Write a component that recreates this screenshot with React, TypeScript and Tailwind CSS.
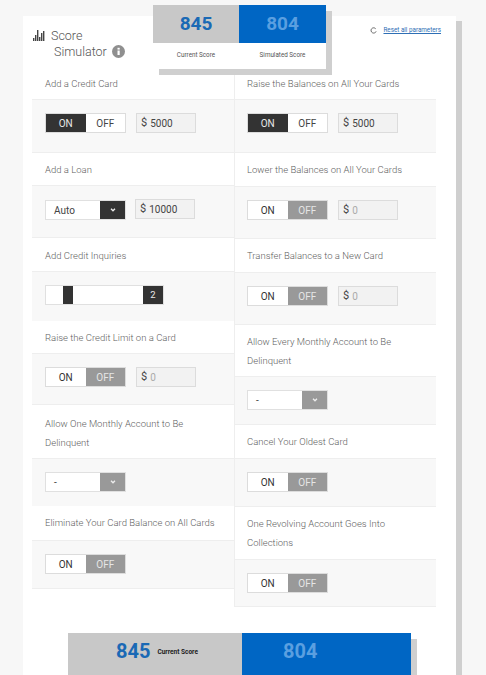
import React from "react";

const font = { fontFamily: "Roboto, sans-serif" };

function Toggle({ on }: { on: boolean }) {
  return (
    <div className="flex h-[20px] w-[81px] border border-[#dcdcdc] text-[10px]">
      <div className={on ? "flex w-1/2 items-center justify-center bg-[#333333] text-[#e8e8e8]" : "flex w-1/2 items-center justify-center bg-white text-[#333]"}>ON</div>
      <div className={on ? "flex w-1/2 items-center justify-center bg-white text-[#444]" : "flex w-1/2 items-center justify-center bg-[#999999] text-[#e6e6e6]"}>OFF</div>
    </div>
  );
}

function Amount({ value, muted }: { value: string; muted?: boolean }) {
  return (
    <div className="flex h-[20px] w-[60px] items-center gap-[3px] border border-[#dcdcdc] bg-[#f2f2f2] pl-[4px] text-[10px] text-[#444]">
      <span className="text-[11px]">$</span>
      <span className={muted ? "text-[#aaa]" : "text-[#444]"}>{value}</span>
    </div>
  );
}

function Select({ label, dark }: { label: string; dark?: boolean }) {
  return (
    <div className="flex h-[20px] w-[81px] border border-[#e0e0e0] bg-white text-[10px] text-[#444]">
      <div className="flex flex-1 items-center pl-[8px]">{label}</div>
      <div className={dark ? "flex w-[25px] items-center justify-center bg-[#333333]" : "flex w-[25px] items-center justify-center bg-[#999999]"}>
        <svg width="6" height="4" viewBox="0 0 7 5" fill="none" stroke="#eee" strokeWidth="1.6"><path d="M1 1l2.5 2.5L6 1" /></svg>
      </div>
    </div>
  );
}

function Slider() {
  return (
    <div className="flex h-[20px] w-[119px] border border-[#e0e0e0] bg-white">
      <div className="w-[17px]" />
      <div className="w-[10px] bg-[#333333]" />
      <div className="flex-1" />
      <div className="flex w-[20px] items-center justify-center bg-[#333333] text-[9.5px] text-[#e8e8e8]">2</div>
    </div>
  );
}

function Row({ title, titleH, controlH, children, border, pt = "pt-[13px]", tp = "pt-[7px]" }: { title: string; titleH: string; controlH: string; children: React.ReactNode; border?: boolean; pt?: string; tp?: string }) {
  return (
    <div>
      <div className={`${titleH} ${tp} border-b border-[#eeeeee] text-[9.5px] font-light leading-[19px] text-[#5f5f5f]`}>
        <div className="pr-[15px]">{title}</div>
      </div>
      <div className={`${controlH} ${pt} flex items-start gap-[10px] bg-[#f8f8f8] ${border ? "border-b border-[#eeeeee]" : ""}`}>
        {children}
      </div>
    </div>
  );
}

export default function App() {
  return (
    <div className="h-[675px] w-[486px] overflow-hidden bg-[#f7f7f7] pl-[23px] pt-[16px]" style={font}>
      <div className="relative w-[433px] bg-white pl-[9px] shadow-[6px_5px_0_0_#cfcfcf]">
        <div className="absolute left-[130px] top-[-11px] z-10 w-[173px] bg-white shadow-[6px_6px_0_0_#cfcfcf]">
          <div className="flex h-[38px]">
            <div className="flex w-[86px] items-center justify-center bg-[#c8c8c8] text-[19px] font-bold text-[#1a69b5]">845</div>
            <div className="flex w-[87px] items-center justify-center bg-[#0066c4] text-[19px] font-bold text-[#5a9fe0]">804</div>
          </div>
          <div className="flex h-[26px] items-center text-[6.3px] text-[#555]">
            <div className="w-[86px] text-center">Current Score</div>
            <div className="w-[87px] text-center">Simulated Score</div>
          </div>
        </div>

        <div className="flex h-[51px] items-start justify-between pr-[15px]">
          <div className="ml-[1px] mt-[12px] text-[12.5px] font-light leading-[15px] text-[#555]">
            <div className="flex items-center gap-[5px]">
              <svg width="13" height="11" viewBox="0 0 13 11" fill="#444">
                <rect x="0" y="8" width="1.4" height="3" /><rect x="2" y="5" width="1.4" height="6" /><rect x="4" y="0" width="1.4" height="11" /><rect x="6" y="7" width="1.4" height="4" /><rect x="8" y="3" width="1.4" height="8" /><rect x="10" y="1" width="1.4" height="10" />
              </svg>
              <span>Score</span>
            </div>
            <div className="ml-[21px] mt-[1px] flex items-center gap-[5px]">
              <span>Simulator</span>
              <svg width="13" height="13" viewBox="0 0 13 13"><circle cx="6.5" cy="6.5" r="6.5" fill="#8f8f8f" /><rect x="5.5" y="5.5" width="2.2" height="4.5" fill="#fff" /><rect x="5.5" y="2.8" width="2.2" height="1.8" fill="#fff" /></svg>
            </div>
          </div>
          <div className="mt-[10px] flex items-center gap-[6px]">
            <svg width="7" height="7" viewBox="0 0 8 8" fill="none" stroke="#555" strokeWidth="1"><path d="M6.5 2A3 3 0 1 0 7 5" /></svg>
            <span className="text-[6.3px] text-[#2f6fb5] underline">Reset all parameters</span>
          </div>
        </div>

        <div className="flex">
          <div className="w-[203px] border-r border-[#eeeeee] [&>div>div]:pl-[13px]">
            <Row title="Add a Credit Card" titleH="h-[33px]" controlH="h-[53px]" border><Toggle on /><Amount value="5000" /></Row>
            <Row title="Add a Loan" titleH="h-[33px]" controlH="h-[52px]" border pt="pt-[14px]"><Select label="Auto" dark /><div className="-ml-[1px] -mt-[1px]"><Amount value="10000" /></div></Row>
            <Row title="Add Credit Inquiries" titleH="h-[34px]" controlH="h-[49px]" tp="pt-[8px]"><Slider /></Row>
            <Row title="Raise the Credit Limit on a Card" titleH="h-[33px]" controlH="h-[51px]" border><Toggle on={false} /><Amount value="0" muted /></Row>
            <Row title="Allow One Monthly Account to Be Delinquent" titleH="h-[54px]" controlH="h-[47px]" tp="pt-[9px]"><Select label="-" /></Row>
            <Row title="Eliminate Your Card Balance on All Cards" titleH="h-[35px]" controlH="h-[48px]" border><Toggle on={false} /></Row>
          </div>
          <div className="w-[201px] [&>div>div]:pl-[12px]">
            <Row title="Raise the Balances on All Your Cards" titleH="h-[33px]" controlH="h-[53px]" border><Toggle on /><Amount value="5000" /></Row>
            <Row title="Lower the Balances on All Your Cards" titleH="h-[34px]" controlH="h-[52px]" border><Toggle on={false} /><Amount value="0" muted /></Row>
            <Row title="Transfer Balances to a New Card" titleH="h-[34px]" controlH="h-[52px]" border><Toggle on={false} /><Amount value="0" muted /></Row>
            <Row title="Allow Every Monthly Account to Be Delinquent" titleH="h-[52px]" controlH="h-[48px]" border><Select label="-" /></Row>
            <Row title="Cancel Your Oldest Card" titleH="h-[34px]" controlH="h-[48px]" border><Toggle on={false} /></Row>
            <Row title="One Revolving Account Goes Into Collections" titleH="h-[53px]" controlH="h-[47px]" border><Toggle on={false} /></Row>
          </div>
        </div>

        <div className="ml-[36px] mt-[26px] flex h-[60px] w-[343px] shadow-[6px_6px_0_0_#cfcfcf]">
          <div className="flex w-[174px] items-start bg-[#c8c8c8] pl-[48px] pt-[6px]">
            <span className="text-[20px] font-bold leading-[24px] text-[#1a69b5]">845</span>
            <span className="ml-[7px] mt-[9px] text-[6.5px] font-bold text-[#222]">Current Score</span>
          </div>
          <div className="w-[169px] bg-[#0066c4] pl-[41px] pt-[6px]">
            <span className="text-[20px] font-bold leading-[24px] text-[#5a9fe0]">804</span>
          </div>
        </div>
      </div>
    </div>
  );
}
